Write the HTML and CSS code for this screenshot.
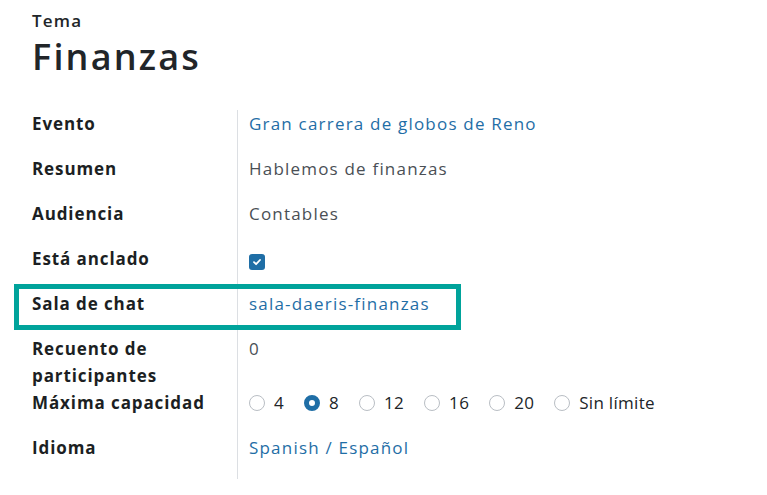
FILE: index.html
```html
<!DOCTYPE html>
<html lang="es">
<head>
<meta charset="utf-8">
<title>Finanzas</title>
<link rel="stylesheet" href="styles.css">
</head>
<body>
<div class="page">
  <div class="head">
    <div class="kicker">Tema</div>
    <h1 class="title">Finanzas</h1>
  </div>
  <div class="fields">
    <div class="lbl">Evento</div>
    <div class="val"><a class="link" href="#">Gran carrera de globos de Reno</a></div>

    <div class="lbl">Resumen</div>
    <div class="val">Hablemos de finanzas</div>

    <div class="lbl">Audiencia</div>
    <div class="val">Contables</div>

    <div class="lbl">Está anclado</div>
    <div class="val"><span class="check"><svg width="10" height="10" viewBox="0 0 10 10"><path d="M2 5.2 L4.1 7.2 L8 3" fill="none" stroke="#fff" stroke-width="1.8" stroke-linecap="round" stroke-linejoin="round"/></svg></span></div>

    <div class="lbl highlight-anchor">Sala de chat<span class="highlight"></span></div>
    <div class="val"><a class="link" href="#">sala-daeris-finanzas</a></div>

    <div class="lbl">Recuento de<br>participantes</div>
    <div class="val">0</div>

    <div class="lbl">Máxima capacidad</div>
    <div class="val radios">
      <span class="opt"><span class="radio"></span>4</span>
      <span class="opt"><span class="radio on"></span>8</span>
      <span class="opt"><span class="radio"></span>12</span>
      <span class="opt"><span class="radio"></span>16</span>
      <span class="opt"><span class="radio"></span>20</span>
      <span class="opt"><span class="radio"></span>Sin límite</span>
    </div>

    <div class="lbl">Idioma</div>
    <div class="val"><a class="link" href="#">Spanish / Español</a></div>
  </div>
</div>
</body>
</html>
```
FILE: styles.css
```css
html, body {
  margin: 0;
  padding: 0;
  background: #ffffff;
}
body {
  font-family: "Open Sans", "Noto Sans", sans-serif;
  color: #212529;
}
.page {
  padding: 10px 0 0 32px;
}
.kicker {
  font-size: 17px;
  font-weight: 600;
  line-height: 22px;
  letter-spacing: 1.2px;
  color: #212529;
}
.title {
  margin: 0;
  font-size: 36px;
  font-weight: 600;
  line-height: 50px;
  letter-spacing: 2.2px;
  color: #212529;
}
.fields {
  margin-top: 28px;
  display: grid;
  grid-template-columns: 205px 1fr;
  font-size: 17px;
  line-height: 27px;
  letter-spacing: 1.2px;
}
.lbl {
  font-weight: 700;
  letter-spacing: 0.9px;
  color: #1c1f23;
}
.val {
  border-left: 1px solid #dcdfe3;
  padding-left: 11px;
  padding-bottom: 18px;
  color: #4a4f55;
}
.link {
  color: #1f6ea6;
  text-decoration: none;
}
.check {
  display: inline-flex;
  align-items: center;
  justify-content: center;
  width: 16px;
  height: 16px;
  border-radius: 3px;
  background: #1f6ea6;
  vertical-align: -2px;
}
.highlight-anchor {
  position: relative;
}
.highlight {
  position: absolute;
  left: -18px;
  top: -6px;
  width: 437px;
  height: 36px;
  border: 5px solid #00a39b;
  pointer-events: none;
}
.radios {
  display: flex;
  align-items: center;
  height: 27px;
  color: #212529;
  letter-spacing: 0.3px;
}
.opt {
  display: inline-flex;
  align-items: center;
  margin-right: 20px;
}
.radio {
  width: 14px;
  height: 14px;
  border: 1px solid #b9bec4;
  border-radius: 50%;
  margin-right: 9px;
  box-sizing: content-box;
}
.radio.on {
  width: 6px;
  height: 6px;
  border: 5px solid #1f6ea6;
  background: #fff;
}
```
